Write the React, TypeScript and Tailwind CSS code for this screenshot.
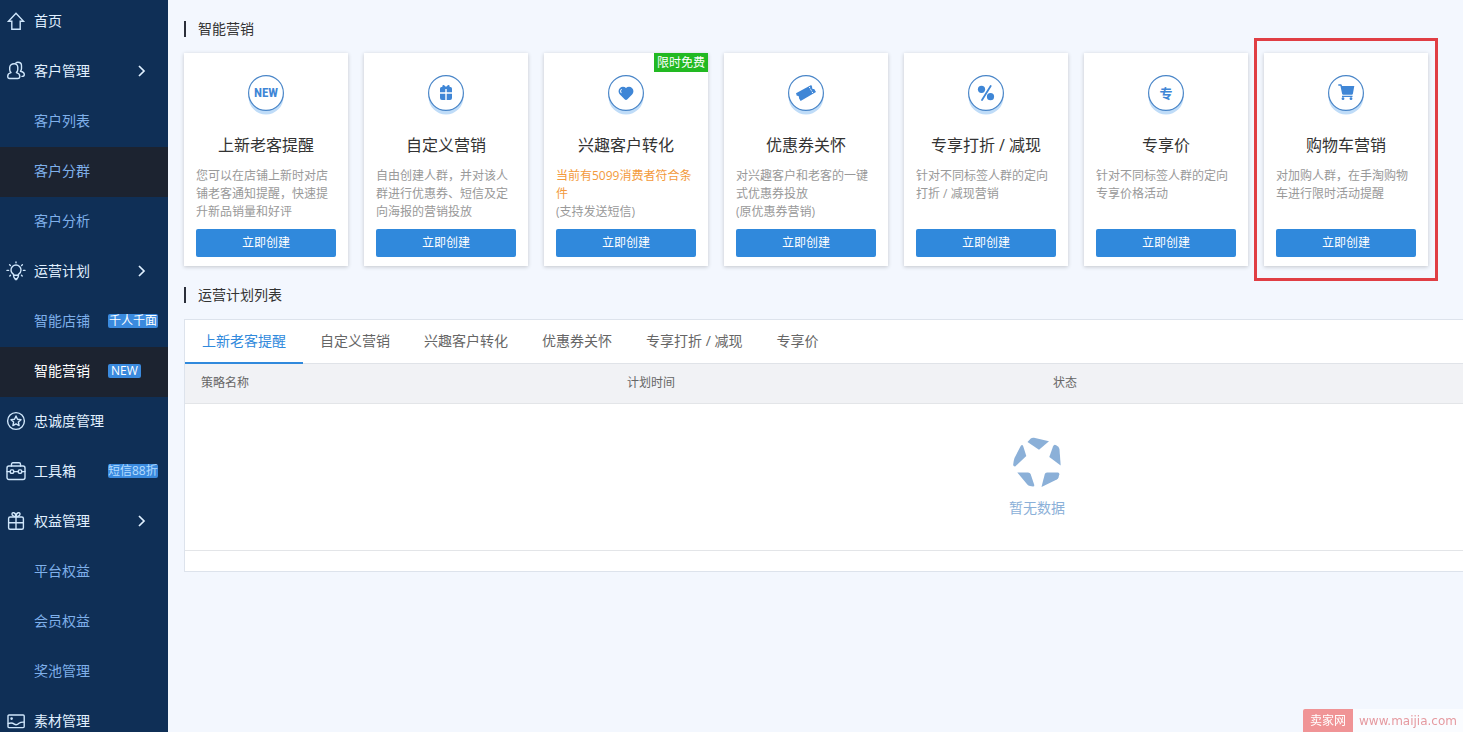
import React from 'react';

type MenuItem = {
  label: string;
  icon?: React.ReactNode;
  arrow?: boolean;
  badge?: string;
  badgeClass?: string;
  state?: 'hover' | 'active';
};

type Plan = {
  title: string;
  icon: React.ReactNode;
  tag?: string;
  highlight?: string;
  desc: string;
  note?: string;
  framed?: boolean;
};

const LineIcon: React.FC<{ children: React.ReactNode }> = ({ children }) => (
  <svg
    viewBox="0 0 20 20"
    className="h-5 w-5"
    fill="none"
    stroke="currentColor"
    strokeWidth="1.4"
    strokeLinejoin="round"
    strokeLinecap="round"
    aria-hidden="true"
  >
    {children}
  </svg>
);

const HomeIcon = () => (
  <LineIcon>
    <path d="M2.5 10.2 10 2.2l7.5 8h-3.3v8.1H5.8v-8.1z" strokeLinejoin="miter" />
  </LineIcon>
);

const UsersIcon = () => (
  <LineIcon>
    <path d="M8.2 2.8c2.2 0 3.6 1.5 3.6 3.7v2.1c0 1.2-.6 2.3-1.4 3 2 .5 3.4 1.7 3.4 3.6 0 1.7-.7 2.3-2 2.300H3.700c-1.300 0-2-.6-2-2.300 0-1.900 1.300-3.100 3.300-3.600-.8-.7-1.300-1.800-1.300-3V6.500c0-2.200 2-3.700 4.500-3.700z" />
    <path d="M9.800 2c.6-.5 1.300-.7 2.100-.7 2.200 0 3.600 1.400 3.600 3.500v2.600c0 1.200-.4 2-1.100 2.800 2.400.5 3.900 1.500 3.900 3.300 0 1.200-.7 1.900-2.300 1.900" />
  </LineIcon>
);

const BulbIcon = () => (
  <LineIcon>
    <path d="M7.600 15v-1.700C6 12.400 5 10.900 5 9a5 5 0 0 1 10 0c0 1.900-1 3.400-2.600 4.300V15c0 1-.7 2-1.400 2.700H9C8.300 17 7.600 16 7.600 15zM7.700 14.300h4.600M9.300 18.600h1.400" />
    <path d="M10 1v.8M1 9.400h1.600M17.400 9.400H19M3.600 3.800l.8.700M16.400 3.800l-.8.700M3.800 15l.7-.7M16.200 15l-.7-.7" />
  </LineIcon>
);

const LoyaltyIcon = () => (
  <LineIcon>
    <circle cx="10" cy="10" r="8.400" />
    <path d="m10 5 1.500 3.200 3.500.5-2.600 2.400.7 3.500-3.100-1.700-3.100 1.700.7-3.500L5 8.700l3.500-.5z" />
  </LineIcon>
);

const ToolboxIcon = () => (
  <LineIcon>
    <rect x="1" y="5" width="18" height="13.500" rx="2" />
    <path d="M5.500 5V3.200c0-.9.5-1.400 1.400-1.400h6.200c.9 0 1.400.5 1.400 1.400V5M1 10.600h3M8 10.600h4M16 10.600h3" />
    <rect x="4.300" y="8.900" width="3.400" height="3.400" rx="1" />
    <rect x="12.300" y="8.900" width="3.400" height="3.400" rx="1" />
  </LineIcon>
);

const GiftIcon = () => (
  <LineIcon>
    <rect x="2.600" y="6" width="14.800" height="12.300" rx="1.500" />
    <path d="M2.600 11.800h14.800M10 6v12.300M10 5.800C8.500 5.600 6 4.800 6 3c0-1 .8-1.500 1.700-1.300C9.200 2.100 10 4 10 5.800zM10 5.800c1.500-.2 4-1 4-2.800 0-1-.8-1.500-1.700-1.300C10.800 2.100 10 4 10 5.800z" />
  </LineIcon>
);

const MaterialIcon = () => (
  <LineIcon>
    <rect x="2" y="4" width="16.200" height="12.600" rx="1" />
    <path d="M2.300 12.500c2.700-.9 4.200-.8 6 .6 2 1.500 3.300.5 4.700-.8 1.600-1.300 3.200-1.300 5-1.200" />
    <circle cx="5.600" cy="7.600" r=".6" fill="currentColor" />
  </LineIcon>
);

const menu: MenuItem[] = [
  { label: '首页', icon: <HomeIcon /> },
  { label: '客户管理', icon: <UsersIcon />, arrow: true },
  { label: '客户列表' },
  { label: '客户分群', state: 'hover' },
  { label: '客户分析' },
  { label: '运营计划', icon: <BulbIcon />, arrow: true },
  { label: '智能店铺', badge: '千人千面', badgeClass: 'px-px text-white' },
  { label: '智能营销', badge: 'NEW', badgeClass: 'px-[3px] text-white', state: 'active' },
  { label: '忠诚度管理', icon: <LoyaltyIcon /> },
  { label: '工具箱', icon: <ToolboxIcon />, badge: '短信88折', badgeClass: 'text-[#b5dcff]' },
  { label: '权益管理', icon: <GiftIcon />, arrow: true },
  { label: '平台权益' },
  { label: '会员权益' },
  { label: '奖池管理' },
  { label: '素材管理', icon: <MaterialIcon /> },
];

const plans: Plan[] = [
  {
    title: '上新老客提醒',
    icon: (
      <text x="18" y="22" textAnchor="middle" fontSize="13" fontWeight="700" fontFamily="'Liberation Sans Narrow', 'Roboto Condensed', sans-serif">
        NEW
      </text>
    ),
    desc: '您可以在店铺上新时对店铺老客通知提醒，快速提升新品销量和好评',
  },
  {
    title: '自定义营销',
    icon: (
      <path d="M12 13.800q0-1.800 1.500-1.800h.9c-.5-1.400.8-2.400 2-1.600.8.5 1.200.9 1.600 1.600.4-.7.8-1.100 1.600-1.600 1.200-.8 2.500.2 2 1.600h.9q1.500 0 1.500 1.800V17.300h-5.300V14h-1.400v3.300H12zM12 18.700h5.300V25h-3.300q-2 0-2-2zM18.700 18.700H24V23q0 2-2 2h-3.300z" />
    ),
    desc: '自由创建人群，并对该人群进行优惠券、短信及定向海报的营销投放',
  },
  {
    title: '兴趣客户转化',
    icon: (
      <>
        <path d="M18 13c1.500-1.400 4.300-1.600 6 0 2 1.900 1.800 4.700.1 6.500l-4.700 4.800q-1.400 1.400-2.800 0L11.900 19.500c-1.700-1.800-1.900-4.600.1-6.500 1.700-1.600 4.500-1.400 6 0z" />
        <path d="M13.300 14.400c-1 .9-1 2.300-.2 3.400" fill="none" stroke="#fff" strokeWidth="1" strokeLinecap="round" />
      </>
    ),
    tag: '限时免费',
    highlight: '当前有5099消费者符合条件',
    desc: '',
    note: '(支持发送短信)',
  },
  {
    title: '优惠券关怀',
    icon: (
      <>
        <path d="m8 18.300 15.200-8.300 1 1.900c-.6 1.400.7 2.500 2 2l1.800 3.200-15.400 9-1.700-3.100c.7-1.400-.7-2.700-2-2.100z" />
        <path d="m21.300 12 4 7" fill="none" stroke="#fff" strokeWidth="1" strokeDasharray="1.500 1.200" />
      </>
    ),
    desc: '对兴趣客户和老客的一键式优惠券投放',
    note: '(原优惠券营销)',
  },
  {
    title: '专享打折 / 减现',
    icon: (
      <>
        <circle cx="13.500" cy="14.300" r="3.600" />
        <circle cx="22.500" cy="21.700" r="3.600" />
        <path d="m22.700 11-8.700 14" fill="none" stroke="#3f86d6" strokeWidth="1.800" strokeLinecap="round" />
      </>
    ),
    desc: '针对不同标签人群的定向打折 / 减现营销',
  },
  {
    title: '专享价',
    icon: (
      <text x="18" y="23" textAnchor="middle" fontSize="13" fontWeight="700" fontFamily="'Noto Sans CJK SC', sans-serif">
        专
      </text>
    ),
    desc: '针对不同标签人群的定向专享价格活动',
  },
  {
    title: '购物车营销',
    icon: (
      <>
        <path d="M10.300 9.200h2.400q.9 0 1.100.9l.2.900h12.300l-1.400 7.700q-.2 1-1.200 1h-8.400q-1 0-1.200-1l-1.700-8h-2.100zM14 20.800h10.500V22H14z" />
        <circle cx="15" cy="23.700" r="1.400" />
        <circle cx="23" cy="23.700" r="1.400" />
      </>
    ),
    desc: '对加购人群，在手淘购物车进行限时活动提醒',
    framed: true,
  },
];

const tabs = ['上新老客提醒', '自定义营销', '兴趣客户转化', '优惠券关怀', '专享打折 / 减现', '专享价'];
const columns = ['策略名称', '计划时间', '状态', ''];

const Sidebar: React.FC = () => (
  <nav className="w-[168px] shrink-0 bg-[#0f2f56]">
    <ul>
      {menu.map((item, idx) => (
        <li key={item.label}>
          <a
            href="#"
            className={`flex items-center pr-[18px] pl-[6px] text-sm ${idx === 0 ? 'h-[47px] pb-[5px]' : 'h-[50px] pb-[2px]'} ${
              item.state ? 'bg-[#1c2330]' : ''
            } ${item.state === 'active' ? 'text-white' : item.icon ? 'text-[#e0f0ff]' : 'text-[#7fb0ea]'}`}
          >
            <span className="mr-2 h-5 w-5 shrink-0 text-[#cfe6fb]">{item.icon}</span>
            <span className="w-[74px] shrink-0">{item.label}</span>
            {item.badge && (
              <span className={`shrink-0 rounded-xs bg-[#3a8ade] text-xs leading-[14px] whitespace-nowrap ${item.badgeClass}`}>
                {item.badge}
              </span>
            )}
            {item.arrow && (
              <svg viewBox="0 0 16 16" className="ml-auto h-4 w-4" fill="none" stroke="#e0f0ff" strokeWidth="1.700" aria-hidden="true">
                <path d="m5 3 5 5-5 5" />
              </svg>
            )}
          </a>
        </li>
      ))}
    </ul>
  </nav>
);

const SectionTitle: React.FC<{ children: React.ReactNode }> = ({ children }) => (
  <h2 className="mb-4 border-l-2 border-[#2b2f3a] pl-3 text-sm leading-4 text-[#333]">{children}</h2>
);

const PlanCard: React.FC<{ plan: Plan }> = ({ plan }) => (
  <article className="relative flex w-[164px] shrink-0 flex-col bg-white px-3 pt-[22px] pb-[9px] shadow-[0_1px_4px_rgba(0,0,0,0.2)]">
    {plan.tag && (
      <span className="absolute top-0 right-0 bg-[#22b922] px-[3px] text-xs leading-[19px] text-white">{plan.tag}</span>
    )}
    {plan.framed && (
      <span className="pointer-events-none absolute -inset-x-[10px] -inset-y-[15px] border-3 border-[#e03e44]" />
    )}
    <svg viewBox="0 0 36 40" className="h-10 w-9 self-center" fill="#3f86d6" aria-hidden="true">
      <circle cx="18" cy="22" r="17.500" fill="#bfdcf8" />
      <circle cx="18" cy="18" r="17.400" fill="#fff" stroke="#4a86c8" strokeWidth="1.200" />
      {plan.icon}
    </svg>
    <h3 className="mt-[18px] text-center text-base whitespace-nowrap text-[#333]">{plan.title}</h3>
    <p className="mt-[10px] h-[54px] text-xs leading-[18px] text-[#999]">
      {plan.highlight && <span className="text-[#f39a3c]">{plan.highlight}</span>}
      {plan.desc}
      {plan.note && <span className="block">{plan.note}</span>}
    </p>
    <button type="button" className="mt-2 h-7 rounded-xs bg-[#3089dc] pb-px text-xs text-white">
      立即创建
    </button>
  </article>
);

const EmptyState: React.FC = () => (
  <div className="flex flex-col items-center text-sm text-[#8bb0d8]">
    <svg viewBox="0 0 48 52" className="mb-[10px] h-[52px] w-12" fill="currentColor" aria-hidden="true">
      <path d="M14.500 6 17.500 2.700q1.500-1.200 3.500-.9L36 5.300 26 13.700z" />
      <path d="M36.300 21 40 10.500q1-2.500 3.200-1.200l1.800 1.200q1.300 1 1.500 3L47.700 29.500z" />
      <path d="M13.300 20 10.300 10.500q-1-2.500-2.600-.5L1.500 22q-1 3-1.300 6.500-.2 2.200 2 2z" />
      <path d="M4.300 36.500H15q2 0 2.600 1.500l3.700 11q.3 1.500-1.300 1.500l-3-.4q-1.700-.2-2.700-1.600z" />
      <path d="M34 36.500h10.800q1.800 0 1.500 1.700l-.7 3q-.4 1.500-1.800 2.300L28.500 51 31.800 38q.4-1.500 2.200-1.500z" />
    </svg>
    暂无数据
  </div>
);

const PlanList: React.FC = () => (
  <div className="w-[1706px] border border-[#dde3ec] bg-white pb-5">
    <div role="tablist" className="flex h-11 border-b border-[#e0e3e8] text-sm">
      {tabs.map((tab, idx) => (
        <button
          key={tab}
          type="button"
          role="tab"
          aria-selected={idx === 0}
          className={`-mb-px border-b-2 px-[17px] whitespace-nowrap ${
            idx === 0 ? 'border-[#3089dc] text-[#3089dc]' : 'border-transparent text-[#666]'
          }`}
        >
          {tab}
        </button>
      ))}
    </div>
    <table className="w-full table-fixed border-collapse">
      <thead>
        <tr className="h-[39px] border-b border-[#e3e5e8] bg-[#f1f2f5]">
          {columns.map((col, idx) => (
            <th key={idx} scope="col" className="px-4 text-left text-xs font-normal text-[#666]">
              {col}
            </th>
          ))}
        </tr>
      </thead>
      <tbody>
        <tr className="h-[147px] border-b border-[#e3e5e8]">
          <td colSpan={4}>
            <EmptyState />
          </td>
        </tr>
      </tbody>
    </table>
  </div>
);

export default function App() {
  return (
    <div className="flex h-screen overflow-hidden bg-[#f3f7fe] font-['Open_Sans','Noto_Sans_CJK_SC',sans-serif]">
      <Sidebar />
      <main className="min-w-0 flex-1 overflow-hidden pt-[21px] pl-4">
        <SectionTitle>智能营销</SectionTitle>
        <div className="mb-[21px] flex gap-4">
          {plans.map((plan) => (
            <PlanCard key={plan.title} plan={plan} />
          ))}
        </div>
        <SectionTitle>运营计划列表</SectionTitle>
        <PlanList />
      </main>
      <a href="#" className="fixed right-0 bottom-0 flex h-[23px] items-center bg-white/60 text-xs text-[#e59aa0]">
        <span className="flex h-full items-center rounded-tl-xs bg-[#f09496] px-[7px] text-white">卖家网</span>
        <span className="px-[6px] font-['DejaVu_Sans',sans-serif]">www.maijia.com</span>
      </a>
    </div>
  );
}
